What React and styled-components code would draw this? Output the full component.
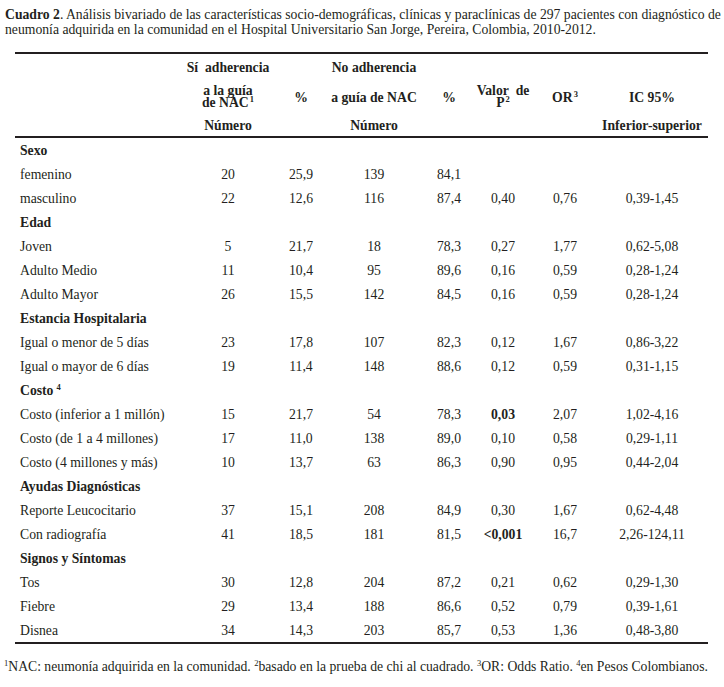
import React from "react";
import styled, { createGlobalStyle } from "styled-components";

const Global = createGlobalStyle`
  html, body { margin: 0; padding: 0; background: #ffffff; }
  body { font-family: "Liberation Serif", "Times New Roman", serif; color: #231f20; }
`;

const Page = styled.div`
  width: 724px;
  height: 687px;
  box-sizing: border-box;
  padding: 7px 0 0 0;
  background: #fff;
  font-family: "Liberation Serif", "Times New Roman", serif;
`;

const Title = styled.div`
  padding-left: 5px;
  font-size: 13.7px;
  line-height: 15px;
  white-space: nowrap;
`;

const TitleBold = styled.span`
  font-weight: bold;
`;

const Table = styled.div`
  margin: 15px 0 0 15px;
  width: 693px;
  border-top: 2px solid #231f20;
  border-bottom: 2px solid #231f20;
`;

const HeadBlock = styled.div`
  border-bottom: 2px solid #231f20;
`;

const Row = styled.div`
  display: grid;
  grid-template-columns: 175px 76px 70px 76px 74px 34px 90px 98px;
  height: ${(p) => p.$h || 24}px;
  font-size: 13.7px;
  font-weight: ${(p) => (p.$bold ? "bold" : "normal")};
`;

const Cell = styled.div`
  display: flex;
  flex-direction: column;
  align-items: ${(p) => (p.$left ? "flex-start" : "center")};
  justify-content: center;
  padding-left: ${(p) => (p.$left ? "5px" : "0")};
  padding-right: ${(p) => (p.$pr ? "14px" : "0")};
  white-space: nowrap;
  font-weight: ${(p) => (p.$bold ? "bold" : "inherit")};
  line-height: 13px;
`;

const StackLine = styled.span`
  display: block;
  line-height: 12.5px;
  height: 12.5px;
`;

const Sup = styled.sup`
  font-size: 8.5px;
  line-height: 0;
  vertical-align: baseline;
  position: relative;
  top: -5px;
  margin-left: 1px;
`;

const Foot = styled.div`
  margin-top: 15px;
  padding-left: 4px;
  font-size: 13.7px;
  line-height: 15px;
  white-space: nowrap;
`;

const FootSup = styled.sup`
  font-size: 8.5px;
  line-height: 0;
  vertical-align: baseline;
  position: relative;
  top: -5px;
`;

const data = [
  { g: "Sexo" },
  { l: "femenino", v: ["20", "25,9", "139", "84,1", "", "", ""] },
  { l: "masculino", v: ["22", "12,6", "116", "87,4", "0,40", "0,76", "0,39-1,45"] },
  { g: "Edad" },
  { l: "Joven", v: ["5", "21,7", "18", "78,3", "0,27", "1,77", "0,62-5,08"] },
  { l: "Adulto Medio", v: ["11", "10,4", "95", "89,6", "0,16", "0,59", "0,28-1,24"] },
  { l: "Adulto Mayor", v: ["26", "15,5", "142", "84,5", "0,16", "0,59", "0,28-1,24"] },
  { g: "Estancia Hospitalaria" },
  { l: "Igual o menor de 5 días", v: ["23", "17,8", "107", "82,3", "0,12", "1,67", "0,86-3,22"] },
  { l: "Igual o mayor de 6 días", v: ["19", "11,4", "148", "88,6", "0,12", "0,59", "0,31-1,15"] },
  { g: "Costo", sup: "4" },
  { l: "Costo (inferior a 1 millón)", v: ["15", "21,7", "54", "78,3", "0,03", "2,07", "1,02-4,16"], b: 4 },
  { l: "Costo (de 1 a 4 millones)", v: ["17", "11,0", "138", "89,0", "0,10", "0,58", "0,29-1,11"] },
  { l: "Costo (4 millones y más)", v: ["10", "13,7", "63", "86,3", "0,90", "0,95", "0,44-2,04"] },
  { g: "Ayudas Diagnósticas" },
  { l: "Reporte Leucocitario", v: ["37", "15,1", "208", "84,9", "0,30", "1,67", "0,62-4,48"] },
  { l: "Con radiografía", v: ["41", "18,5", "181", "81,5", "<0,001", "16,7", "2,26-124,11"], b: 4 },
  { g: "Signos y Síntomas" },
  { l: "Tos", v: ["30", "12,8", "204", "87,2", "0,21", "0,62", "0,29-1,30"] },
  { l: "Fiebre", v: ["29", "13,4", "188", "86,6", "0,52", "0,79", "0,39-1,61"] },
  { l: "Disnea", v: ["34", "14,3", "203", "85,7", "0,53", "1,36", "0,48-3,80"] },
];

export default function App() {
  return (
    <>
      <Global />
      <Page>
        <Title>
          <TitleBold>Cuadro 2</TitleBold>. Análisis bivariado de las características socio-demográficas, clínicas y paraclínicas de 297 pacientes con diagnóstico de
        </Title>
        <Title>
          neumonía adquirida en la comunidad en el Hospital Universitario San Jorge, Pereira, Colombia, 2010-2012.
        </Title>
        <Table>
          <HeadBlock>
            <Row $h={26} $bold>
              <Cell $left />
              <Cell>Sí&nbsp; adherencia</Cell>
              <Cell />
              <Cell>No adherencia</Cell>
              <Cell />
              <Cell />
              <Cell />
              <Cell $pr />
            </Row>
            <Row $h={34} $bold>
              <Cell $left />
              <Cell>
                <StackLine>a la guía</StackLine>
                <StackLine>
                  de NAC<Sup>1</Sup>
                </StackLine>
              </Cell>
              <Cell>%</Cell>
              <Cell>a guía de NAC</Cell>
              <Cell>%</Cell>
              <Cell>
                <StackLine>Valor&nbsp; de</StackLine>
                <StackLine>
                  P<Sup>2</Sup>
                </StackLine>
              </Cell>
              <Cell>
                <span>
                  OR<Sup>3</Sup>
                </span>
              </Cell>
              <Cell $pr>IC 95%</Cell>
            </Row>
            <Row $h={22} $bold>
              <Cell $left />
              <Cell>Número</Cell>
              <Cell />
              <Cell>Número</Cell>
              <Cell />
              <Cell />
              <Cell />
              <Cell $pr>Inferior-superior</Cell>
            </Row>
          </HeadBlock>
          {data.map((r, i) =>
            r.g ? (
              <Row key={i} $bold>
                <Cell $left>
                  <span>
                    {r.g}
                    {r.sup && <Sup> {r.sup}</Sup>}
                  </span>
                </Cell>
              </Row>
            ) : (
              <Row key={i}>
                <Cell $left>{r.l}</Cell>
                {r.v.map((v, j) => (
                  <Cell key={j} $bold={r.b === j} $pr={j === 6}>
                    {v}
                  </Cell>
                ))}
              </Row>
            )
          )}
        </Table>
        <Foot>
          <FootSup>1</FootSup>NAC: neumonía adquirida en la comunidad. <FootSup>2</FootSup>basado en la prueba de chi al cuadrado. <FootSup>3</FootSup>OR: Odds Ratio. <FootSup>4</FootSup>en Pesos Colombianos.
        </Foot>
      </Page>
    </>
  );
}
